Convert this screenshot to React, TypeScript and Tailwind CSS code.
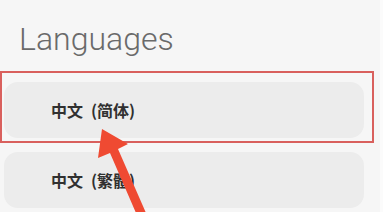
const LANGS = ['中文\u2002(简体)', '中文\u2002(繁體)'];

const Arrow = () => (
  <svg className="pointer-events-none absolute left-0 top-0" width="383" height="212" viewBox="0 0 383 212">
    <polygon
      points="102,129 98,158 110,153 136,213 146,213 118,149 128,144"
      fill="#ef4a32"
    />
  </svg>
);

export default function App() {
  return (
    <div className="relative h-[212px] w-[383px] overflow-hidden bg-[#f6f6f6]">
      <div className="absolute right-0 top-0 h-full w-[3px] bg-[#fbfbfb]" />
      <h1
        className="pl-[19px] pt-[19px] text-[32px] font-light leading-[40px] text-[#6a6a6a]"
        style={{ fontFamily: 'Roboto, "Noto Sans", sans-serif' }}
      >
        Languages
      </h1>
      <div className="mt-[23px] flex w-[364px] flex-col gap-[14px] pl-[4px]">
        {LANGS.map((l) => (
          <div
            key={l}
            className="flex h-[56px] items-center rounded-[14px] bg-[#ececec] pl-[47px] text-[16px] font-semibold text-[#303030]"
            style={{ fontFamily: '"Noto Sans CJK SC", "Noto Sans", sans-serif' }}
          >
            {l}
          </div>
        ))}
      </div>
      <div className="absolute left-0 top-[71px] h-[72px] w-[374px] border-[2.5px] border-[#d9605d]" />
      <Arrow />
    </div>
  );
}
